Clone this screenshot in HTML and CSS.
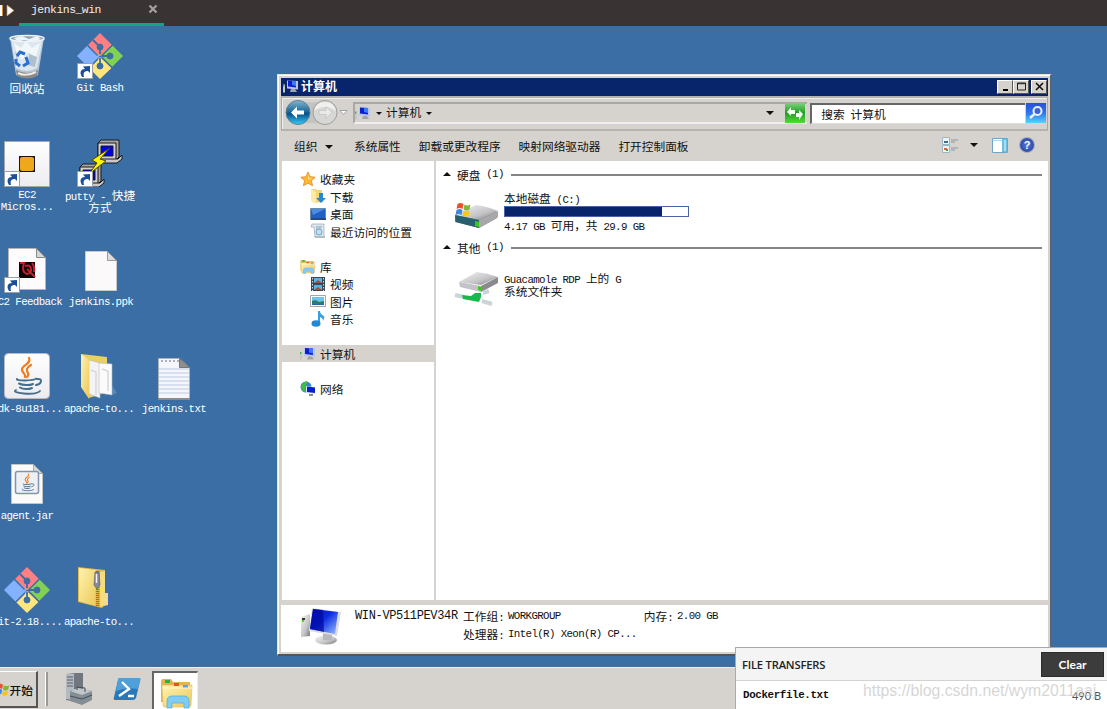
FILE: index.html
```html
<!DOCTYPE html>
<html lang="zh-CN">
<head>
    <meta charset="UTF-8">
    <meta name="viewport" content="width=device-width, initial-scale=1.0">
    <title>jenkins_win</title>
    <link rel="stylesheet" href="styles.css">
</head>
<body>
    <!-- shared icons -->
    <svg class="sprite" width="0" height="0">
        <defs>
            <linearGradient id="g-screen" x1="0" y1="0" x2="1" y2="1">
                <stop offset="0" stop-color="#0010c8"/><stop offset=".45" stop-color="#0a2be0"/><stop offset="1" stop-color="#9cc0ff"/>
            </linearGradient>
            <linearGradient id="g-metal" x1="0" y1="0" x2="1" y2="1">
                <stop offset="0" stop-color="#f4f4f4"/><stop offset=".6" stop-color="#c4c4c6"/><stop offset="1" stop-color="#77777b"/>
            </linearGradient>
            <linearGradient id="g-folder" x1="0" y1="0" x2="1" y2="1">
                <stop offset="0" stop-color="#fff3b0"/><stop offset="1" stop-color="#ecc95a"/>
            </linearGradient>
            <linearGradient id="g-paper" x1="0" y1="0" x2="0" y2="1">
                <stop offset="0" stop-color="#ffffff"/><stop offset="1" stop-color="#ececf0"/>
            </linearGradient>
            <linearGradient id="g-back" x1="0" y1="0" x2="0" y2="1">
                <stop offset="0" stop-color="#86b4cc"/><stop offset=".45" stop-color="#1f6c9d"/><stop offset=".55" stop-color="#07508a"/><stop offset="1" stop-color="#35d0fa"/>
            </linearGradient>
            <linearGradient id="g-blue" x1="0" y1="0" x2="0" y2="1">
                <stop offset="0" stop-color="#2a50d8"/><stop offset=".5" stop-color="#2f74ee"/><stop offset="1" stop-color="#55d4fb"/>
            </linearGradient>
            <linearGradient id="g-green" x1="0" y1="0" x2="0" y2="1">
                <stop offset="0" stop-color="#7bd37b"/><stop offset=".5" stop-color="#1f9f22"/><stop offset="1" stop-color="#53dc36"/>
            </linearGradient>
        </defs>
        <symbol id="computer" viewBox="0 0 42 38">
            <path d="M1 10l9-3v22l-9 1z" fill="url(#g-metal)"/>
            <path d="M2 11h3v2H2z" fill="#333"/><path d="M2 13h2v2H2z" fill="#59d020"/>
            <ellipse cx="26" cy="33" rx="11" ry="4.5" fill="url(#g-metal)"/>
            <path d="M23 26l9 1v6h-9z" fill="#b8b8bc"/>
            <path d="M12 1l29 4-4 24-28-5z" fill="#dcdce0"/>
            <path d="M13 2l25 3-3 22-25-5z" fill="url(#g-screen)"/>
            <path d="M13 2l10 1 1 22-14-3z" fill="#0008a0" opacity=".7"/>
        </symbol>
        <symbol id="pc" viewBox="0 0 16 14">
            <path d="M0 5h2v8H0z" fill="#c5c8c5"/><path d="M0 5h1.300v2H0z" fill="#34b54a"/>
            <path d="M4 1l11 .5v8.500L4 9z" fill="#b9c4ea"/>
            <path d="M5 1l8 .6v6.400L5 7z" fill="#0b1fd0"/>
            <path d="M9 1.300l4 .3v5l-4-1z" fill="#3f7af5"/>
            <path d="M8 9.500h4l2 3H7z" fill="#a3a3a8"/>
        </symbol>
        <symbol id="git" viewBox="0 0 48 48">
            <path d="M24 1L12 13l11 11h2l11-11z" fill="#ff7f83"/>
            <path d="M11.500 13.500L1 24l11.500 11.500L23 25v-2z" fill="#85b2ff"/>
            <path d="M36.500 13.500L47 24 36 35 25 25v-2z" fill="#82d152"/>
            <path d="M13 36l11-11 11.500 11L24 47z" fill="#ffe57e"/>
            <g fill="#3a6ea5" stroke="#3a6ea5">
                <path d="M17 8l7 7M24 15v7M24 26v8M26 24h8" fill="none" stroke-width="1.800"/>
                <circle cx="24" cy="15" r="3"/><circle cx="34" cy="24" r="3"/><circle cx="24" cy="34" r="3"/>
                <path d="M11.500 13.500l10 10M36.500 13L25 24.500M13 36l9-9M36 35.500l-10-10" fill="none" stroke-width="1.400"/>
            </g>
        </symbol>
        <symbol id="java" viewBox="0 0 32 40">
            <g fill="none" stroke-linecap="round">
                <path d="M18 2c3 6-8 7-7 12 .5 3 4 4 3 7M20 9c-5 3-5 5-3 8 1 2 0 3-1 4" stroke="#f07a1c" stroke-width="2.200"/>
                <path d="M6 23c-2 2 17 2 19-.5M8 27.500c4 2 11 2 14 .5M9 31.500c3 2 9 2 12 .5M26 23c6-1 5 5-1 6" stroke="#44708e" stroke-width="2"/>
                <path d="M5 34c-7 3 20 6 24 1" stroke="#44708e" stroke-width="1.800"/>
            </g>
        </symbol>
        <symbol id="shortcut" viewBox="0 0 16 16">
            <path d="M.5.500h15v15H.5z" fill="#fff" stroke="#9aa0a8"/>
            <path d="M5 14c-3-5-1-8 3-8L6 3.500 13 3v7l-2-2c-4 0-5 2-4 6z" fill="#1b4f9c"/>
        </symbol>
        <symbol id="winflag" viewBox="0 0 16 15">
            <path d="M2 2q3-2 6 0L7 7Q4 5 1 7z" fill="#e8512a"/>
            <path d="M9 2.500q3 2 6 0l-1 5q-3 2-6 0z" fill="#7fba2c"/>
            <path d="M1 8q3-2 6 0l-1 5q-3-2-6 0z" fill="#3f87dc"/>
            <path d="M8 8.500q3 2 6 0l-1 5q-3 2-6 0z" fill="#fbc31c"/>
        </symbol>
        <symbol id="library" viewBox="0 0 34 32">
            <path d="M1 4q0-2 2-2h8l2 3h17v20H1z" fill="#dfb64e"/>
            <path d="M2 8h30l-1 20q0 2-2 2H5q-2 0-2-2z" fill="url(#g-folder)" stroke="#dcb95f" stroke-width=".6"/>
            <path d="M5 3h5v3H5z" fill="#30b040"/><path d="M14 6h5v3h-5z" fill="#e84f2c"/><path d="M23 8h5v3h-5z" fill="#4ea8e8"/>
            <path d="M2 11h30" stroke="#fff8cc"/>
            <path d="M7 31v-7q0-5 5-5h12q5 0 5 5v7h-5v-5H12v5z" fill="#7fcdf2" stroke="#4da9d8" stroke-width=".7"/>
        </symbol>
    </svg>

    <header class="tabbar">
        <svg class="nav-arrows" width="18" height="18" viewBox="0 0 18 18">
            <path d="M0 5h2v11H0z" fill="#fff"/><path d="M2 5h1v11H2z" fill="#d08a3c"/>
            <path d="M7 5l7 5.500L7 16z" fill="#fff" stroke="#c98a4a" stroke-width=".7"/>
        </svg>
        <div class="tab">
            <span>jenkins_win</span>
            <svg class="tab-close" width="10" height="10" viewBox="0 0 10 10"><path d="M1.500 1.500l7 7m0-7l-7 7" stroke="#a5a1a1" stroke-width="2.200"/></svg>
        </div>
    </header>

    <main class="desktop">
        <div class="shortcut recycle">
            <svg width="36" height="46" viewBox="0 0 36 46">
                <path d="M1 4l6 37q11 6 22 0l6-37z" fill="#b4c4d4"/>
                <path d="M2 5l5 29q11 6 21 0l6-29q-16 5-32 0z" fill="#dce6ee"/>
                <path d="M5 9l7 5 5-7 6 7 8-5-4 14-8-5-6 8-5-6z" fill="#f8fbfd" opacity=".8"/>
                <path d="M20 20l8 3-2 10-7-2zM6 17l3 4-1 7z" fill="#aebfcd"/>
                <path d="M7 36q11 6 22 0l-1 6q-10 5-20 0z" fill="#8b8785"/>
                <path d="M9 39q8 4 18-1" fill="none" stroke="#ece8e2" stroke-width="2"/>
                <ellipse cx="18" cy="4.500" rx="17" ry="3" fill="#8d9fae" stroke="#eef3f7" stroke-width="1.500"/>
                <path d="M5 4l8-2 7 3 8-3 4 3-8 3-9-2-6 2z" fill="#edf3f8"/>
                <path d="M8 22l3-4 5 2M17 23l2 6-5 3M11 32l-4-3v-4" fill="none" stroke="#2a6fd0" stroke-width="3"/>
            </svg>
            <p>回收站</p>
        </div>
        <div class="shortcut git-bash">
            <svg width="48" height="48"><use href="#git"/></svg>
            <svg class="badge" width="16" height="16"><use href="#shortcut"/></svg>
            <p class="en">Git Bash</p>
        </div>
        <div class="shortcut ec2-micros">
            <svg width="46" height="46" viewBox="0 0 46 46">
                <path d="M.5.500h45v45H.5z" fill="url(#g-paper)" stroke="#a7a7a7"/>
                <path d="M15 15h16v16H15z" fill="#17150c"/>
                <rect x="16" y="16" width="14" height="14" rx="2" fill="#efa71c"/>
            </svg>
            <svg class="badge" width="16" height="16"><use href="#shortcut"/></svg>
            <p class="en">EC2<br>Micros...</p>
        </div>
        <div class="shortcut putty">
            <svg width="48" height="48" viewBox="0 0 48 48">
                <g id="term" stroke="#1a1a1a">
                    <path d="M22 4l3-3h18v17l-3 3H22z" fill="#a5a5a5"/>
                    <path d="M22 4h18v17H22z" fill="#d0d0d0"/>
                    <path d="M25 7h12v10H25z" fill="#0000e8"/>
                    <path d="M20 20h22l4-4v4l-5 4H20z" fill="#c9c9c9"/>
                </g>
                <use href="#term" x="-18" y="24"/>
                <path d="M34 9L16 21l5 3-8 11 17-13-6-2z" fill="#fcf400" stroke="#4a4700"/>
            </svg>
            <svg class="badge" width="16" height="16"><use href="#shortcut"/></svg>
            <p><span class="en">putty - </span>快捷<br>方式</p>
        </div>
        <div class="shortcut ec2-feedback">
            <svg width="38" height="42" viewBox="0 0 38 42">
                <path d="M.5.500h28l9 9v32H.5z" fill="#fdfbfb" stroke="#b5b5b5"/>
                <path d="M28.500.500v9h9z" fill="#d5d5d5" stroke="#888"/>
                <path d="M11 14h16v16H11z" fill="#0c0305"/>
                <path d="M12 15h4q-3 9 3 11 5-1 4-5-1-5-6-3M19 21l8 8M24 15q3 4 2 9" fill="none" stroke="#c51f2c" stroke-width="2"/>
            </svg>
            <svg class="badge" width="16" height="16"><use href="#shortcut"/></svg>
            <p class="en">EC2 Feedback</p>
        </div>
        <div class="shortcut ppk">
            <svg width="32" height="40" viewBox="0 0 32 40">
                <path d="M.5.500h22l9 9v30H.5z" fill="#fbf9f9" stroke="#c9c9c9"/>
                <path d="M22.500.500v9h9z" fill="#dcdcdc" stroke="#999"/>
            </svg>
            <p class="en">jenkins.ppk</p>
        </div>
        <div class="shortcut jdk">
            <svg width="46" height="46" viewBox="0 0 46 46">
                <rect x=".5" y=".5" width="45" height="45" rx="4" fill="url(#g-paper)" stroke="#b9b9bd"/>
                <use href="#java" x="7" y="3" width="32" height="40"/>
            </svg>
            <p class="en">jdk-8u181...</p>
        </div>
        <div class="shortcut apache">
            <svg width="38" height="47" viewBox="0 0 38 47">
                <path d="M1 1l26 3v35L9 45z" fill="#e7cf6c"/>
                <path d="M9 7l11 3v35l-11-4z" fill="#f4f4f6" stroke="#bbb" stroke-width=".6"/>
                <path d="M19 10l13 1v31l-13-2z" fill="#fbfbfb" stroke="#bbb" stroke-width=".6"/>
                <path d="M11 17l5 2v23M22 16l6 2v20" fill="none" stroke="#d8d8dc" stroke-width="1.500"/>
                <path d="M1 1l8 6v39L1 34z" fill="url(#g-folder)"/>
                <path d="M32 32l5 8-5 2z" fill="#6f9ac4" opacity=".6"/>
            </svg>
            <p class="en">apache-to...</p>
        </div>
        <div class="shortcut txt">
            <svg width="32" height="42" viewBox="0 0 32 42">
                <path d="M.5.500h21l10 9v32H.5z" fill="#f4f6fb" stroke="#aeb3bb"/>
                <path d="M1 11h30M1 15h30M1 19h30M1 23h30M1 27h30M1 31h30M1 35h30" stroke="#bccbe0"/>
                <path d="M3 3h18" stroke="#999" stroke-width="1.500" stroke-dasharray="2 2"/>
                <path d="M21.500.500v9h10z" fill="#8f8f8f" stroke="#777"/>
                <path d="M0 41h32" stroke="#8b8b8b" stroke-width="2"/>
            </svg>
            <p class="en">jenkins.txt</p>
        </div>
        <div class="shortcut jar">
            <svg width="32" height="40" viewBox="0 0 32 40">
                <path d="M.5.500h22l9 9v30H.5z" fill="#fbfafa" stroke="#c4c4c4"/>
                <path d="M22.500.500v9h9z" fill="#d8d8d8" stroke="#aaa"/>
                <rect x="4.500" y="7.500" width="23" height="22" rx="2" fill="#eef0f3" stroke="#8196aa" stroke-width="1.500"/>
                <use href="#java" x="9" y="9" width="15" height="19"/>
            </svg>
            <p class="en">agent.jar</p>
        </div>
        <div class="shortcut git-setup">
            <svg width="48" height="48"><use href="#git"/></svg>
            <p class="en">git-2.18....</p>
        </div>
        <div class="shortcut zip">
            <svg width="30" height="42" viewBox="0 0 30 42">
                <path d="M0 0l27 3v35l-3 3L0 35z" fill="#e0b94c"/>
                <path d="M1 1l17 2v36L1 34z" fill="url(#g-folder)"/>
                <path d="M22 5l5-1v34l-5 2z" fill="#f5dc80"/>
                <path d="M27 26h3v12l-4 1z" fill="#f5dc80"/>
                <path d="M19.500 4v36" stroke="#777" stroke-width="3.500" stroke-dasharray="1 1"/>
                <path d="M17 5h4l1 13-3 4-3-4z" fill="#858994" stroke="#555a64" stroke-width=".6"/>
                <path d="M18.500 7v9" stroke="#f4f4f6" stroke-width="1.500"/>
            </svg>
            <p class="en">apache-to...</p>
        </div>

        <section class="window">
            <div class="titlebar">
                <svg width="16" height="15"><use href="#pc"/></svg>
                <h1>计算机</h1>
                <div class="win-buttons">
                    <button><svg width="11" height="9"><path d="M3 8h5" stroke="#000" stroke-width="2"/></svg></button>
                    <button><svg width="11" height="9"><path d="M1.500 1h8v7h-8zM1.500 1.700h8" fill="none" stroke="#222"/></svg></button>
                    <button class="close"><svg width="11" height="9"><path d="M2 1l7 7m0-7L2 8" stroke="#111" stroke-width="1.600"/></svg></button>
                </div>
            </div>
            <div class="addressbar">
                <svg class="travel" width="64" height="28" viewBox="0 0 64 28">
                    <path d="M13 1q13 5 27 0v25q-14-4-27 0z" fill="#c3c3c1"/>
                    <circle cx="13" cy="13.500" r="12" fill="url(#g-back)" stroke="#5f7f94"/>
                    <path d="M6 13.500l6-6v4h7v4h-7v4z" fill="#fff"/>
                    <circle cx="40" cy="13.500" r="12" fill="#d7d7d6" stroke="#9d9d9d"/>
                    <path d="M29 12q11-8 22 0-2-9-11-9t-11 9z" fill="#f0f0ef"/>
                    <path d="M47 13.500l-6-6v4h-7v4h7v4z" fill="#e9e9e8" stroke="#bbb" stroke-width=".6"/>
                    <path d="M55 11.500h7l-3.500 4z" fill="#fff" stroke="#8d9099" stroke-width=".8"/>
                </svg>
                <div class="path">
                    <svg width="16" height="15"><use href="#pc"/></svg>
                    <i class="down"></i>
                    <span>计算机</span>
                    <i class="down"></i>
                    <i class="down last"></i>
                </div>
                <svg class="refresh" width="20" height="20" viewBox="0 0 20 20">
                    <path d="M0 0h20v20H0z" fill="url(#g-green)"/>
                    <path d="M2 9l4-5v3h4v4H6v2zM18 11l-4 6v-3h-3v-4h3V7z" fill="#f1fff0"/>
                </svg>
                <div class="search">搜索<span class="en"> </span>计算机</div>
                <svg class="go" width="20" height="20" viewBox="0 0 20 20">
                    <path d="M0 0h20v20H0z" fill="url(#g-blue)"/>
                    <circle cx="11.500" cy="8" r="4" fill="#3d63d8" stroke="#e8f2ff" stroke-width="2"/>
                    <path d="M8.500 11L4 15" stroke="#e8f2ff" stroke-width="2.500"/>
                </svg>
            </div>
            <div class="toolbar">
                <span class="organize">组织 <i class="down big"></i></span>
                <span>系统属性</span>
                <span>卸载或更改程序</span>
                <span>映射网络驱动器</span>
                <span>打开控制面板</span>
                <div class="view-tools">
                    <svg width="16" height="16" viewBox="0 0 16 16">
                        <path d="M.5.500h7v7h-7zM.5 8.500h7v7h-7z" fill="#eef4f8" stroke="#9fb4c4"/>
                        <path d="M2 4h4v2H2z" fill="#34749c"/><path d="M2 11h3v2H2z" fill="#e0643c"/><path d="M4 12h2v2H4z" fill="#4a9f3c"/>
                        <path d="M9 3h7M9 5h4M9 11h7M9 13h4" stroke="#8795a2"/>
                    </svg>
                    <i class="down big"></i>
                    <svg class="pane" width="16" height="15" viewBox="0 0 16 15">
                        <path d="M.5.500h15v14H.5z" fill="#fff" stroke="#73a3c4"/><path d="M1 2.500h10" stroke="#b8d4e6"/><path d="M10 1h5v13h-5z" fill="#72bcdc"/><path d="M12 2h2v11h-2z" fill="#a4def0"/>
                    </svg>
                    <div class="help">?</div>
                </div>
            </div>
            <div class="panes">
                <nav class="sidebar">
                    <div class="row">
                        <svg width="16" height="16" viewBox="0 0 16 16"><path d="M8 1l2.200 4.700 5 .5-3.800 3.500 1.200 5L8 12.300 3.400 14.700l1.200-5L.8 6.200l5-.5z" fill="#ffb82e" stroke="#e5872a" stroke-width=".8"/><path d="M8 3l1 4 3 .5-4 1z" fill="#ffe48c"/></svg>
                        <span>收藏夹</span>
                    </div>
                    <div class="row sub">
                        <svg width="16" height="16" viewBox="0 0 16 16"><path d="M1 1h5l1 1h5v12l-7 1-4-2z" fill="#f1d67b"/><path d="M1 1l5 3v11l-5-2z" fill="#ffeca3"/><path d="M9 5h4v5h3l-5 5-5-5h3z" fill="#2589d4"/></svg>
                        <span>下载</span>
                    </div>
                    <div class="row sub">
                        <svg width="16" height="16" viewBox="0 0 16 16"><path d="M.5 2.500h15v11H.5z" fill="#2160c4" stroke="#6f8ba8"/><path d="M1 3h14L3 9z" fill="#4c8de4"/><path d="M1 12h15v2H1z" fill="#234a82"/></svg>
                        <span>桌面</span>
                    </div>
                    <div class="row sub">
                        <svg width="16" height="16" viewBox="0 0 16 16"><path d="M2 1h12v13H5L4 4H1z" fill="#dce6ee" stroke="#a4b0ba" stroke-width=".8"/><path d="M6 4h6M6 6h5M6 11h6" stroke="#86a5bf"/><circle cx="9" cy="9" r="3" fill="#bfe0f2" stroke="#6a9aba" stroke-width=".8"/><path d="M4 13h11v2H5z" fill="#b3bcc3"/></svg>
                        <span>最近访问的位置</span>
                    </div>
                    <div class="row gap">
                        <svg width="16" height="15"><use href="#library"/></svg>
                        <span>库</span>
                    </div>
                    <div class="row sub">
                        <svg width="14" height="16" viewBox="0 0 14 16"><path d="M0 1h14v14H0z" fill="#3a4652"/><path d="M3 2h8v5H3zM3 9h8v5H3z" fill="#59b3e8"/><path d="M3 7l4-3 4 3zM3 14l4-3 4 3z" fill="#a3523a"/><path d="M1.500 2v13M12.500 2v13" stroke="#cdd5dc" stroke-dasharray="1.500 1.500"/></svg>
                        <span>视频</span>
                    </div>
                    <div class="row sub">
                        <svg width="16" height="14" viewBox="0 0 16 14"><path d="M.5 1.500h15v11H.5z" fill="#fff" stroke="#a1a6ab"/><path d="M2 3h12v8H2z" fill="#6cc4ec"/><path d="M2 7q4-2 7 1l5-1v4H2z" fill="#2b7d6b"/><path d="M2 10h12v1H2z" fill="#2a68a4"/></svg>
                        <span>图片</span>
                    </div>
                    <div class="row sub">
                        <svg width="14" height="16" viewBox="0 0 14 16"><path d="M7 0h2q0 3 4 5 1 2-1 5 0-3-3-4v6H7z" fill="#3b9fe4"/><ellipse cx="5" cy="12.500" rx="4.500" ry="3.200" fill="#2487d4"/></svg>
                        <span>音乐</span>
                    </div>
                    <div class="row gap selected">
                        <svg width="16" height="14"><use href="#pc"/></svg>
                        <span>计算机</span>
                    </div>
                    <div class="row gap">
                        <svg width="16" height="16" viewBox="0 0 16 16"><circle cx="6" cy="6" r="5.500" fill="#2f86d8"/><path d="M2 3q4-4 6-2L5 6l1 4-2 1Q-1 8 2 3z" fill="#45b84a"/><path d="M6 5l9 1v7l-9-1z" fill="#dce4f4"/><path d="M7 5.500l8 1v5.500l-8-1z" fill="#0820c8"/><path d="M9 13h4v2H9z" fill="#8c8c94"/></svg>
                        <span>网络</span>
                    </div>
                </nav>
                <div class="content">
                    <h2><i class="up"></i>硬盘<span class="en"> (1)</span></h2>
                    <div class="item drive">
                        <svg width="45" height="27" viewBox="0 0 45 27">
                            <path d="M1 14L22 5l21 5v6L25 26 1 20z" fill="#77797c"/>
                            <path d="M1 13L22 3q10 1 22 6L25 18z" fill="url(#g-metal)"/>
                            <path d="M1 13l24 5v8L2 20z" fill="#26606e"/>
                            <path d="M25 18l19-9v6l-19 11z" fill="#a8a8aa"/>
                            <path d="M21 19l4 1v5l-4-1z" fill="#39c91b"/>
                            <use href="#winflag" x="1" y="0" width="17" height="15"/>
                        </svg>
                        <div class="info">
                            <p>本地磁盘<span class="en"> (C:)</span></p>
                            <div class="meter"><div class="used" style="width: 86%"></div></div>
                            <p><span class="en">4.17 GB </span>可用，共<span class="en"> 29.9 GB</span></p>
                        </div>
                    </div>
                    <h2><i class="up"></i>其他<span class="en"> (1)</span></h2>
                    <div class="item share">
                        <svg width="45" height="36" viewBox="0 0 45 36">
                            <path d="M5 11L23 1q10 1 21 5L27 14z" fill="url(#g-metal)"/>
                            <path d="M5 11l22 4v6L6 16z" fill="#c2c2c8"/>
                            <path d="M27 15L44 6v6L27 21z" fill="#8a8a8d"/>
                            <path d="M24 15l3 1v4l-3-1z" fill="#39c91b"/>
                            <path d="M1 24l9 2M29 22l6-2M28 30l10 3" stroke="#c8d4d6" stroke-width="4"/>
                            <path d="M8 24l9 1 4-3h6v4l-2 5-16-3z" fill="#18b84c"/>
                        </svg>
                        <div class="info">
                            <p><span class="en">Guacamole RDP </span>上的<span class="en"> G</span></p>
                            <p>系统文件夹</p>
                        </div>
                    </div>
                </div>
            </div>
            <footer class="details">
                <svg width="42" height="38"><use href="#computer"/></svg>
                <div class="name">WIN-VP511PEV34R</div>
                <dl>
                    <dt>工作组<span class="en">:</span></dt><dd class="en">WORKGROUP</dd>
                    <dt>内存<span class="en">:</span></dt><dd class="en">2.00 GB</dd>
                    <dt>处理器<span class="en">:</span></dt><dd class="en">Intel(R) Xeon(R) CP...</dd>
                </dl>
            </footer>
        </section>
    </main>

    <footer class="taskbar">
        <div class="start"><svg width="14" height="15"><use href="#winflag"/></svg><span>开始</span></div>
        <div class="grip"></div>
        <svg class="server" width="28" height="32" viewBox="0 0 28 32">
            <path d="M1 1l10-1h7v26l-7 3-10-2z" fill="#70777f"/><path d="M1 1h8v26l-8-1z" fill="#b3bac0"/>
            <path d="M2 4h6M2 7h6M2 10h6M2 13h6" stroke="#596068"/>
            <path d="M5 18l8-3 14 3v9l-10 5-12-4z" fill="#858e95"/><path d="M5 18l8-3 14 3-10 4z" fill="#bfc7cc"/>
            <path d="M12 17v-3l8 1v4M5 23l12 3 10-4" fill="none" stroke="#464d54"/>
        </svg>
        <svg class="powershell" width="28" height="24" viewBox="0 0 28 24">
            <path d="M7 1h19q2 0 1 3l-4 17q-1 2-3 2H2q-2 0-1-3L5 3q0-2 2-2z" fill="#2b78b8"/>
            <path d="M7 1h19q2 0 1 3l-2 8Q13 10 3 14L5 3q0-2 2-2z" fill="#4fa0d8"/>
            <path d="M9 5l7 7-10 7M15 19h6" fill="none" stroke="#fff" stroke-width="2.400"/>
        </svg>
        <div class="task active"><svg width="34" height="32"><use href="#library"/></svg></div>
    </footer>

    <aside class="transfers">
        <div class="transfers-head">
            <h3>FILE TRANSFERS</h3>
            <button>Clear</button>
        </div>
        <div class="transfer">
            <span class="filename">Dockerfile.txt</span>
            <span class="size">490 B</span>
        </div>
        <div class="watermark">https://blog.csdn.net/wym2011aaj</div>
    </aside>
</body>
</html>
```
FILE: styles.css
```css
* {
    box-sizing: border-box;
}
body {
    margin: 0;
    width: 1107px;
    height: 709px;
    overflow: hidden;
    display: flex;
    flex-direction: column;
    position: relative;
    background: #3a6ea5;
    font-family: "Noto Sans CJK SC", sans-serif;
    font-size: 11.7px;
    line-height: 13px;
    color: #111;
}
h1, h2, h3, p, dl, dd {
    margin: 0;
    font-weight: normal;
}
svg {
    display: block;
    flex: none;
}
.sprite {
    position: absolute;
}
.en {
    font-family: "Liberation Mono", monospace;
    font-size: 10.8px;
    letter-spacing: -0.63px;
    white-space: pre;
}
span.en {
    line-height: 1px;
}

/* connection tabs */
.tabbar {
    display: flex;
    height: 26px;
    flex: none;
    background: #3a3333;
}
.nav-arrows {
    margin-right: 1px;
}
.tab {
    width: 145px;
    display: flex;
    justify-content: space-between;
    padding: 4px 6px 0 12px;
    border-bottom: 3px solid #17a187;
    color: #eee;
    font-family: "Liberation Mono", monospace;
    font-size: 11.4px;
    letter-spacing: -0.48px;
}

/* desktop */
.desktop {
    position: relative;
    flex: 1;
}
.shortcut {
    position: absolute;
    width: 76px;
    display: flex;
    flex-direction: column;
    align-items: center;
    color: #fff;
    text-align: center;
    line-height: 12px;
    white-space: nowrap;
}
.shortcut p {
    margin-top: auto;
    line-height: 12px;
}
.badge {
    position: absolute;
    left: 15px;
    top: 31px;
}
.recycle { left: -11px; top: 8px; height: 60px; }
.git-bash { left: 62px; top: 6px; height: 62px; }
.ec2-micros { left: -11px; top: 115px; height: 72px; }
.ec2-micros .badge { top: 30px; }
.putty { left: 62px; top: 113px; height: 74px; }
.putty .badge { top: 32px; }
.ec2-feedback { left: -11px; top: 222px; height: 60px; }
.ec2-feedback .badge { top: 29px; }
.ppk { left: 63px; top: 225px; height: 57px; }
.jdk { left: -11px; top: 327px; height: 62px; }
.apache { left: 61px; top: 327px; height: 62px; }
.txt { left: 136px; top: 332px; height: 57px; }
.jar { left: -11px; top: 438px; height: 58px; }
.git-setup { left: -11px; top: 540px; height: 62px; }
.zip { left: 61px; top: 541px; height: 61px; }
.zip svg { margin-right: 12px; }

/* explorer window */
.window {
    position: absolute;
    left: 277px;
    top: 48px;
    width: 775px;
    height: 582px;
    display: flex;
    flex-direction: column;
    padding: 3px 2px 2px 3px;
    background: #d6d3ce;
    border: 1px solid #e4e4e2;
    border-right: 2px solid #5b6470;
    border-bottom: 2px solid #555;
    box-shadow: inset 1px 1px #fff;
}
.titlebar {
    display: flex;
    align-items: center;
    height: 18px;
    padding: 0 1px 0 2px;
    gap: 2px;
    background: #08246b;
    color: #fff;
}
.titlebar h1 {
    font-size: 12px;
    font-weight: bold;
    line-height: 16px;
    margin-top: -2px;
}
.win-buttons {
    display: flex;
    margin-left: auto;
}
.win-buttons button {
    width: 16px;
    height: 14px;
    padding: 0;
    display: flex;
    align-items: center;
    justify-content: center;
    background: #d6d3ce;
    border: 1px solid #fff;
    border-right-color: #555;
    border-bottom-color: #555;
}
.win-buttons .close {
    margin-left: 2px;
}
.addressbar {
    display: flex;
    align-items: center;
    height: 35px;
    padding: 0 1px 0 3px;
    border: 1px solid #aaa8a4;
    border-top: 2px solid #b5b3b0;
    border-bottom: 2px solid #b5b3b0;
    box-shadow: inset 1px 1px #eee;
}
.path {
    width: 455px;
    height: 22px;
    margin-left: 4px;
    display: flex;
    align-items: center;
    gap: 4px;
    border: 2px solid #aaa8a5;
    border-right-width: 0;
    border-bottom-color: #eee;
}
.path span {
    margin: -3px 0 0 -1px;
}
.down {
    width: 0;
    height: 0;
    display: inline-block;
    margin: 0 1px;
    border: 3px solid transparent;
    border-top-color: #111;
    border-bottom: 0;
}
.down.last,
.down.big {
    border-width: 4px 4px 0;
}
.down.last {
    margin-left: auto;
    margin-right: 33px;
}
.refresh {
    margin-left: -22px;
}
.search {
    width: 215px;
    height: 21px;
    margin: 0 1px 0 5px;
    padding: 2px 9px;
    background: #fff;
    border: 2px solid #666;
    border-right: 0;
    border-bottom: 1px solid #ddd;
}
.toolbar {
    display: flex;
    align-items: center;
    gap: 18px;
    height: 30px;
    padding: 0 14px 1px 13px;
}
.organize {
    width: 42px;
    white-space: nowrap;
}
.organize .down {
    margin: 0 0 2px 5px;
}
.view-tools {
    display: flex;
    align-items: center;
    margin-left: auto;
}
.view-tools .down {
    margin: 0 14px 0 12px;
}
.help {
    width: 14px;
    height: 14px;
    margin-left: 12px;
    border-radius: 50%;
    background: radial-gradient(#5576d8, #1b399f);
    box-shadow: 0 0 0 1px #a9aeba;
    color: #fff;
    font: bold 11px/14px "Liberation Sans", sans-serif;
    text-align: center;
}
.panes {
    display: flex;
    height: 440px;
}
.sidebar {
    width: 152px;
    padding-top: 9px;
    margin-left: 1px;
    background: #fff;
}
.row {
    display: flex;
    align-items: center;
    gap: 4px;
    height: 17.5px;
    padding-left: 18px;
}
.row svg {
    width: 16px;
}
.row.sub {
    padding-left: 28px;
}
.row.gap {
    margin-top: 17.5px;
}
.selected {
    background: #d6d3ce;
}
.content {
    flex: 1;
    margin-left: 2px;
    padding: 7px 6px 0 7px;
    background: #fff;
}
.content h2 {
    display: flex;
    align-items: center;
    height: 13px;
    font-size: 11.7px;
    white-space: pre;
}
.content h2::after {
    content: "";
    flex: 1;
    height: 2px;
    margin: 2px 0 0 7px;
    background: #858585;
}
.up {
    margin-right: 6px;
    border: 4px solid transparent;
    border-bottom: 4px solid #111;
    border-top: 0;
}
.item {
    display: flex;
    gap: 5px;
    padding-left: 11px;
}
.drive {
    height: 60px;
    padding-top: 10px;
}
.drive svg {
    margin-top: 11px;
}
.share {
    padding-top: 17px;
}
.info p {
    height: 13px;
    white-space: nowrap;
}
.meter {
    width: 185px;
    height: 11px;
    margin: 2px 0 1px;
    border: 1px solid #4a64a6;
    background: #fff;
}
.used {
    height: 100%;
    background: #08246b;
}
.details {
    display: flex;
    height: 47px;
    margin-top: 5px;
    padding: 2px 0 0 19px;
    background: #fff;
}
.name {
    width: 107px;
    margin: 3px 0 0 13px;
    font-family: "Liberation Mono", monospace;
    font-size: 12px;
    letter-spacing: -0.35px;
}
.details dl {
    display: grid;
    grid-template-columns: 42px 128px 33px auto;
    grid-auto-rows: 13px;
    column-gap: 4px;
    row-gap: 5px;
    align-content: start;
    padding-top: 2px;
}
.details dt {
    text-align: right;
    white-space: nowrap;
}
.details dd {
    padding-top: 1px;
}

/* taskbar */
.taskbar {
    display: flex;
    flex: none;
    height: 42px;
    padding-top: 3px;
    background: #d6d3ce;
    border-top: 1px solid #eee;
}
.start {
    width: 38px;
    height: 37px;
    display: flex;
    align-items: center;
    justify-content: flex-end;
    padding-right: 3px;
    border-top: 1px solid #fff;
    border-right: 2px solid #555;
    border-bottom: 2px solid #555;
    font-weight: 500;
    white-space: nowrap;
}
.start svg {
    margin-left: -6px;
}
.grip {
    width: 3px;
    height: 34px;
    margin: 1px 18px 0 7px;
    border-left: 1px solid #fff;
    border-right: 2px solid #999;
}
.server {
    margin: 2px 0 0 -1px;
}
.powershell {
    margin: 6px 0 0 20px;
}
.task {
    width: 46px;
    height: 38px;
    margin-left: 11px;
    padding: 4px 6px;
    background: #fff;
    border: 2px solid #666;
    border-right: 1px solid #eee;
    border-bottom: 0;
}

/* file transfer panel */
.transfers {
    position: absolute;
    left: 735px;
    top: 647px;
    width: 372px;
    height: 62px;
    background: #fff;
    border: 1px solid #aaa;
    border-right: 0;
    border-bottom: 0;
}
.transfers-head {
    display: flex;
    align-items: center;
    justify-content: space-between;
    height: 33px;
    padding: 0 3px 0 6px;
    background: #f4f4f4;
    border-bottom: 1px solid #d2d2d2;
}
.transfers-head h3 {
    font: 600 11.2px "Open Sans", sans-serif;
    letter-spacing: -0.2px;
    color: #222;
}
.transfers-head button {
    width: 63px;
    height: 25px;
    border: 1px solid #2c2c2c;
    background: #3c3c3c;
    color: #fff;
    font: bold 12px Lato, sans-serif;
}
.transfer {
    display: flex;
    justify-content: space-between;
    padding: 8px 6px 0 7px;
}
.filename {
    font: bold 10.8px/13px "Liberation Mono", monospace;
    letter-spacing: -0.35px;
}
.size {
    font: 11px/13px Lato, sans-serif;
    color: #555;
}
.watermark {
    position: absolute;
    left: 127px;
    top: 33px;
    font: 15.8px/20px "Liberation Sans", sans-serif;
    color: rgba(200, 200, 200, 0.75);
}
```
